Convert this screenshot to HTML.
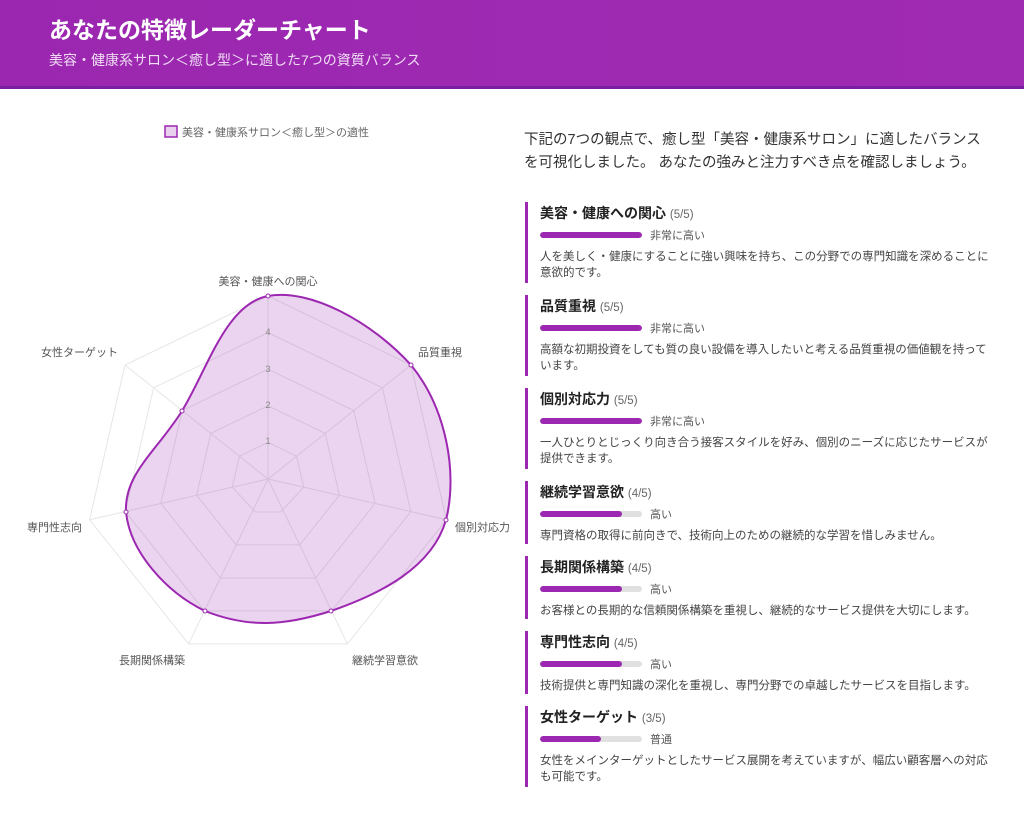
<!DOCTYPE html>
<html><head><meta charset="utf-8"><style>
*{margin:0;padding:0;box-sizing:border-box}
body{width:1024px;height:837px;background:#fff;font-family:"Liberation Sans","Noto Sans CJK JP",sans-serif;position:relative;overflow:hidden;color:#333}
.hdr{position:absolute;left:0;top:0;width:1024px;height:89px;background:linear-gradient(90deg,#9b27b0,#a02bb3);border-bottom:3px solid #7b1fa2}
.hdr h1{position:absolute;left:49px;top:15px;font-size:23px;font-weight:bold;color:#fff;line-height:30px}
.hdr p{position:absolute;left:49px;top:51px;font-size:14px;color:#f0dcf4;line-height:18px}
.intro{position:absolute;left:524px;top:129px;width:462px;font-size:14.5px;line-height:23px;color:#333}
.items{position:absolute;left:525px;top:202px;width:470px}
.it{border-left:3px solid #9c27b0;padding-left:12px;margin-bottom:12px;height:81px;overflow:hidden}
.it.s{height:63px}
.t{height:22px;line-height:22px;font-size:14px;font-weight:bold;color:#222}
.t span{font-weight:normal;font-size:11.5px;color:#666}
.b{height:14px;margin-top:4px;display:flex;align-items:center}
.tr{width:102px;height:6px;background:#e0e0e0;border-radius:3px;overflow:hidden}
.tr i{display:block;height:6px;background:#9c27b0;border-radius:3px}
.b em{font-style:normal;font-size:11px;color:#555;margin-left:8px}
.d{margin-top:7px;font-size:11.5px;line-height:16px;color:#444}
</style></head><body>
<div class="hdr"><h1>あなたの特徴レーダーチャート</h1><p>美容・健康系サロン＜癒し型＞に適した7つの資質バランス</p></div>

<svg style="position:absolute;left:0;top:95px" width="520" height="620" viewBox="0 95 520 620">
<rect x="165" y="126" width="12" height="11" fill="#e8d0ee" stroke="#9c27b0" stroke-width="1.5"/>
<text x="182" y="136" font-size="11" fill="#666" font-family="Liberation Sans,Noto Sans CJK JP,sans-serif">美容・健康系サロン＜癒し型＞の適性</text>
<g fill="none" stroke="#e6e6e6" stroke-width="1">
<polygon points="268,442.4 296.6,456.2 303.7,487.1 280.7,512 255.3,512 232.3,487.1 239.4,456.2"/>
<polygon points="268,405.8 325.2,433.4 339.4,495.3 299.7,544.9 236.3,544.9 196.6,495.3 210.8,433.4"/>
<polygon points="268,369.2 353.8,410.6 375.1,503.4 315.6,578 220.4,578 160.9,503.4 182.2,410.6"/>
<polygon points="268,332.6 382.4,387.8 410.8,511.6 331.5,610.9 204.5,610.9 125.2,511.6 153.6,387.8"/>
<polygon points="268,296 411,365 446.4,519.7 347.4,643.9 188.6,643.9 89.6,519.7 125,365"/>
<path d="M268 479L268 296M268 479L411 365M268 479L446.4 519.7M268 479L347.4 643.9M268 479L188.6 643.9M268 479L89.6 519.7M268 479L125 365"/>
</g>
<path d="M268 296C310 288 372 322 411 365C446 408 458 472 446 520C432 568 380 594 331 611C284 626 248 628 205 611C166 592 130 552 126 512C124 474 156 452 182 411C208 368 226 304 268 296Z" fill="rgba(156,39,176,0.2)" stroke="#9c27b0" stroke-width="2"/>
<g fill="#fff" stroke="#9c27b0" stroke-width="1"><circle cx="268" cy="296" r="2"/><circle cx="411" cy="365" r="2"/><circle cx="446" cy="520" r="2"/><circle cx="331" cy="611" r="2"/><circle cx="205" cy="611" r="2"/><circle cx="126" cy="512" r="2"/><circle cx="182" cy="411" r="2"/></g>
<g font-size="9" fill="#888" text-anchor="middle" font-family="Liberation Sans,sans-serif"><text x="268" y="444">1</text><text x="268" y="408">2</text><text x="268" y="372">3</text><text x="268" y="335">4</text></g>
<g font-size="11" fill="#555" font-family="Liberation Sans,Noto Sans CJK JP,sans-serif">
<text x="268" y="285" text-anchor="middle">美容・健康への関心</text>
<text x="418" y="356">品質重視</text>
<text x="455" y="531">個別対応力</text>
<text x="352" y="664">継続学習意欲</text>
<text x="185" y="664" text-anchor="end">長期関係構築</text>
<text x="82" y="531" text-anchor="end">専門性志向</text>
<text x="118" y="356" text-anchor="end">女性ターゲット</text>
</g>
</svg>

<div class="intro">下記の7つの観点で、癒し型「美容・健康系サロン」に適したバランスを可視化しました。 あなたの強みと注力すべき点を確認しましょう。</div>

<div class="items">
<div class="it"><div class="t">美容・健康への関心 <span>(5/5)</span></div><div class="b"><div class="tr"><i style="width:100%"></i></div><em>非常に高い</em></div><div class="d">人を美しく・健康にすることに強い興味を持ち、この分野での専門知識を深めることに意欲的です。</div></div>
<div class="it"><div class="t">品質重視 <span>(5/5)</span></div><div class="b"><div class="tr"><i style="width:100%"></i></div><em>非常に高い</em></div><div class="d">高額な初期投資をしても質の良い設備を導入したいと考える品質重視の価値観を持っています。</div></div>
<div class="it"><div class="t">個別対応力 <span>(5/5)</span></div><div class="b"><div class="tr"><i style="width:100%"></i></div><em>非常に高い</em></div><div class="d">一人ひとりとじっくり向き合う接客スタイルを好み、個別のニーズに応じたサービスが提供できます。</div></div>
<div class="it s"><div class="t">継続学習意欲 <span>(4/5)</span></div><div class="b"><div class="tr"><i style="width:80%"></i></div><em>高い</em></div><div class="d">専門資格の取得に前向きで、技術向上のための継続的な学習を惜しみません。</div></div>
<div class="it s"><div class="t">長期関係構築 <span>(4/5)</span></div><div class="b"><div class="tr"><i style="width:80%"></i></div><em>高い</em></div><div class="d">お客様との長期的な信頼関係構築を重視し、継続的なサービス提供を大切にします。</div></div>
<div class="it s"><div class="t">専門性志向 <span>(4/5)</span></div><div class="b"><div class="tr"><i style="width:80%"></i></div><em>高い</em></div><div class="d">技術提供と専門知識の深化を重視し、専門分野での卓越したサービスを目指します。</div></div>
<div class="it"><div class="t">女性ターゲット <span>(3/5)</span></div><div class="b"><div class="tr"><i style="width:60%"></i></div><em>普通</em></div><div class="d">女性をメインターゲットとしたサービス展開を考えていますが、幅広い顧客層への対応も可能です。</div></div>
</div>
</body></html>
